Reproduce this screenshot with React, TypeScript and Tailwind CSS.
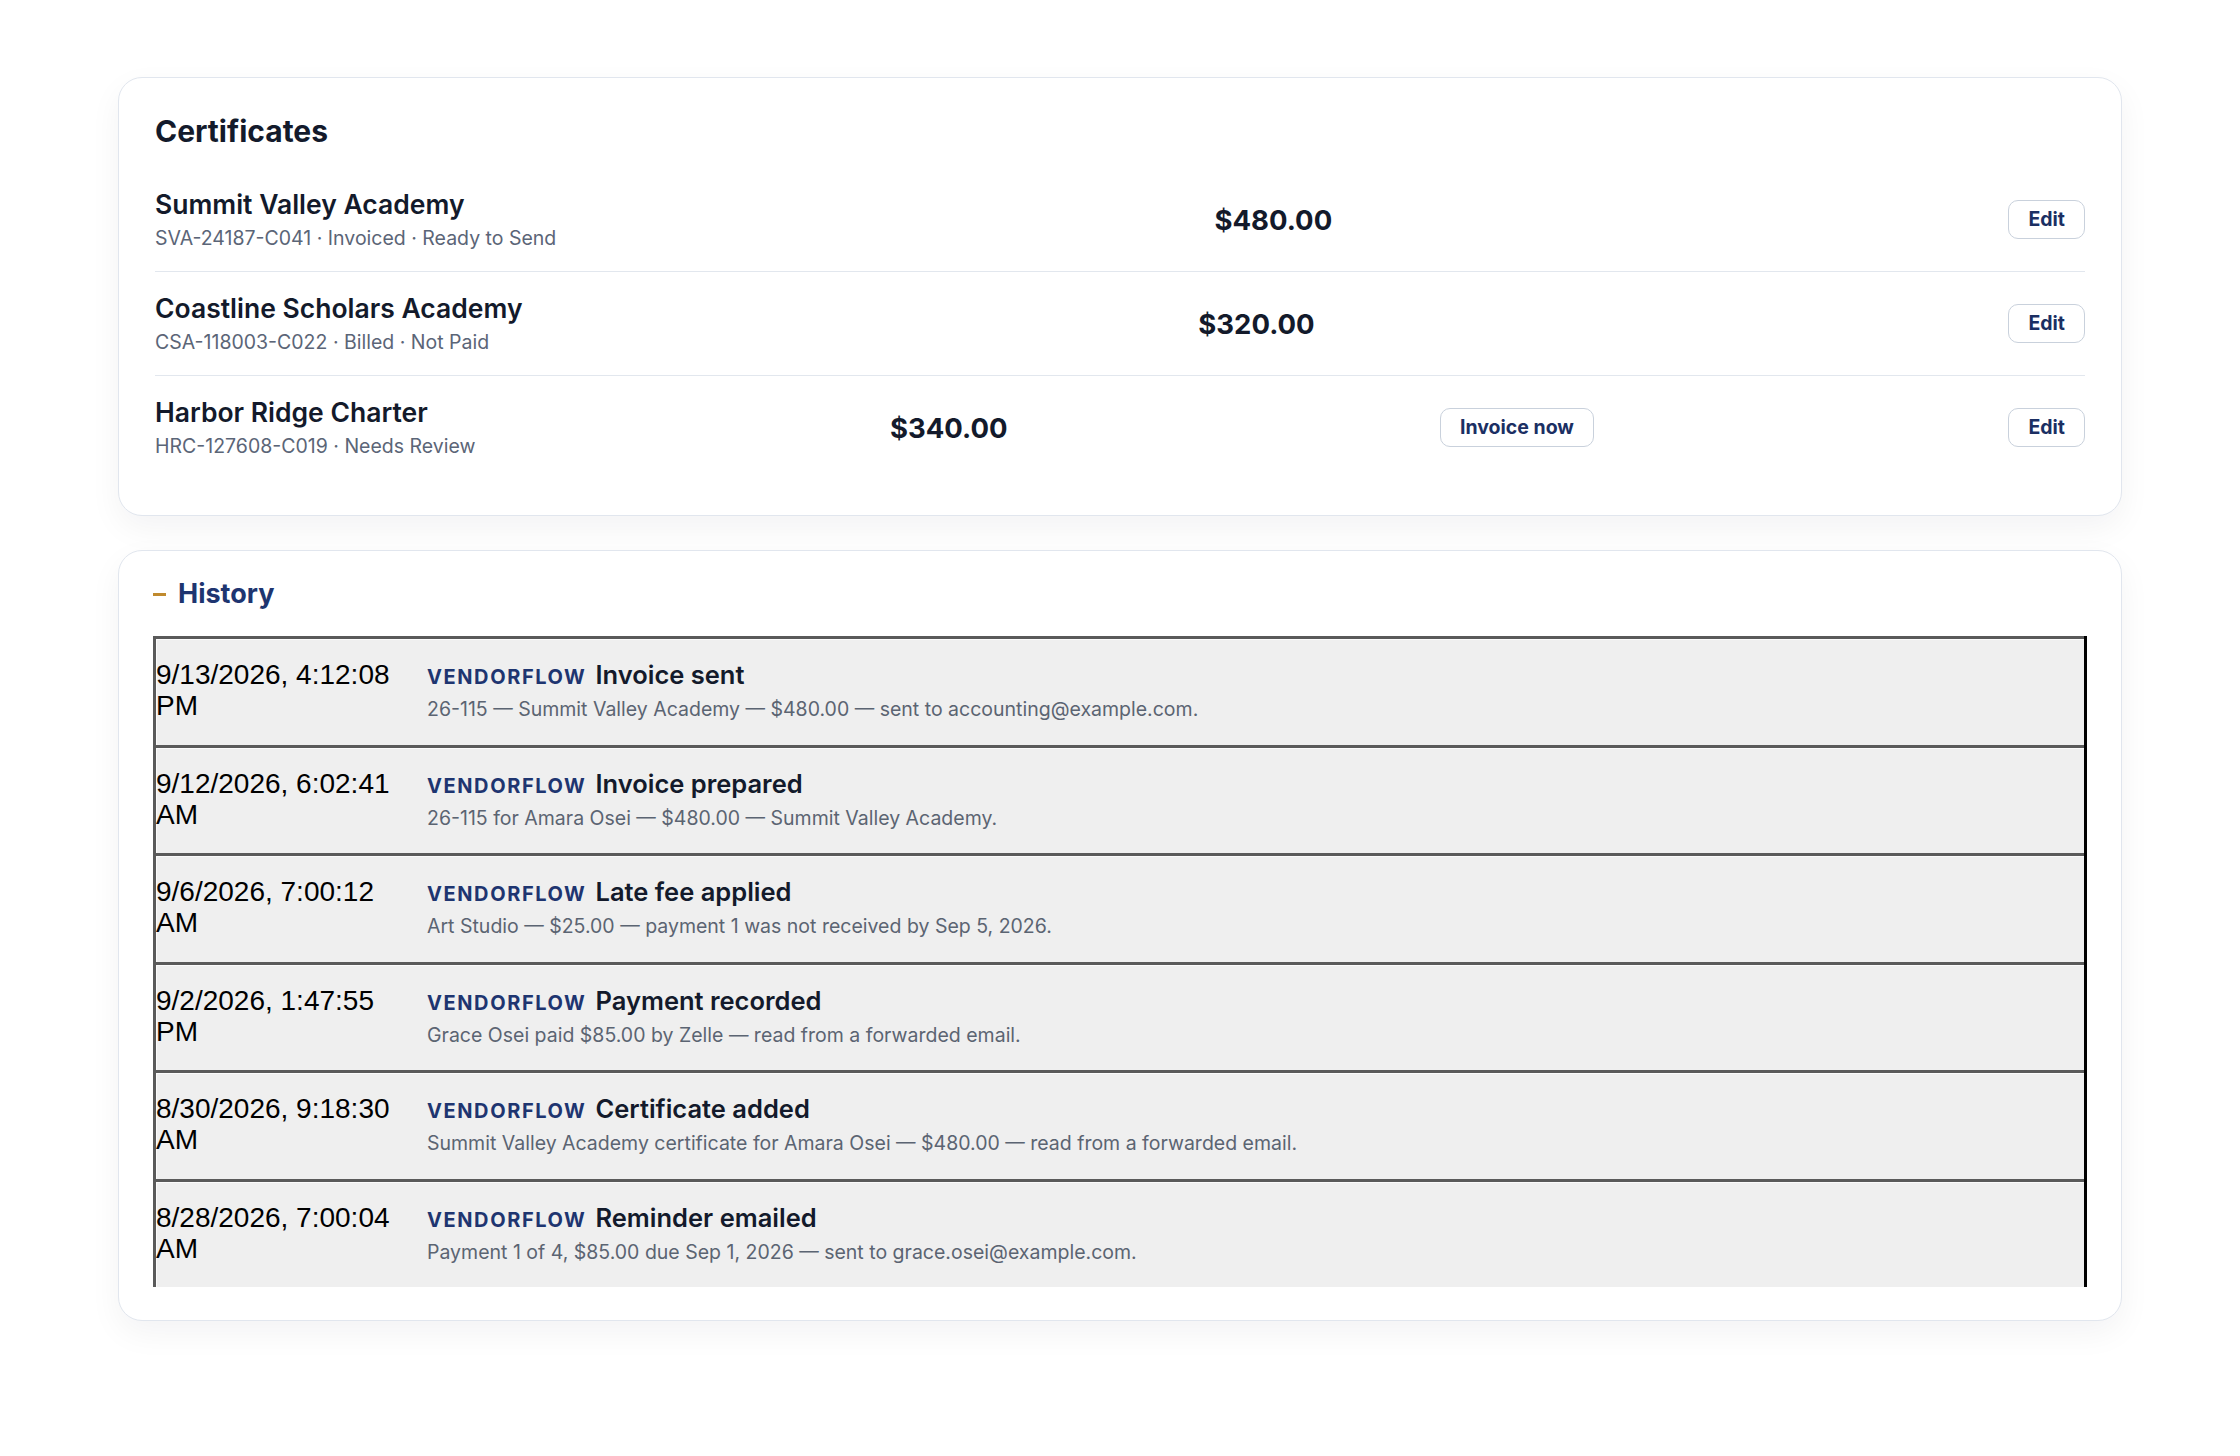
import React from "react";

type Certificate = {
  school: string;
  meta: string;
  amount: string;
  canInvoice?: boolean;
};

type HistoryEntry = {
  when: string;
  title: string;
  detail: string;
};

const CERTIFICATES: Certificate[] = [
  {
    school: "Summit Valley Academy",
    meta: "SVA-24187-C041 · Invoiced · Ready to Send",
    amount: "$480.00",
  },
  {
    school: "Coastline Scholars Academy",
    meta: "CSA-118003-C022 · Billed · Not Paid",
    amount: "$320.00",
  },
  {
    school: "Harbor Ridge Charter",
    meta: "HRC-127608-C019 · Needs Review",
    amount: "$340.00",
    canInvoice: true,
  },
];

const HISTORY: HistoryEntry[] = [
  {
    when: "9/13/2026, 4:12:08 PM",
    title: "Invoice sent",
    detail: "26-115 — Summit Valley Academy — $480.00 — sent to accounting@example.com.",
  },
  {
    when: "9/12/2026, 6:02:41 AM",
    title: "Invoice prepared",
    detail: "26-115 for Amara Osei — $480.00 — Summit Valley Academy.",
  },
  {
    when: "9/6/2026, 7:00:12 AM",
    title: "Late fee applied",
    detail: "Art Studio — $25.00 — payment 1 was not received by Sep 5, 2026.",
  },
  {
    when: "9/2/2026, 1:47:55 PM",
    title: "Payment recorded",
    detail: "Grace Osei paid $85.00 by Zelle — read from a forwarded email.",
  },
  {
    when: "8/30/2026, 9:18:30 AM",
    title: "Certificate added",
    detail: "Summit Valley Academy certificate for Amara Osei — $480.00 — read from a forwarded email.",
  },
  {
    when: "8/28/2026, 7:00:04 AM",
    title: "Reminder emailed",
    detail: "Payment 1 of 4, $85.00 due Sep 1, 2026 — sent to grace.osei@example.com.",
  },
];

function OutlineButton({ children }: { children: React.ReactNode }) {
  return (
    <button
      type="button"
      className="h-[39px] px-[19px] rounded-[10px] border border-[#c9d1dc] bg-white text-[19.5px] leading-none font-bold text-[#1b2f63]"
    >
      {children}
    </button>
  );
}

function CertificateRow({ cert }: { cert: Certificate }) {
  return (
    <li className="flex items-center justify-between py-5 border-b border-[#e2e7ee] last:border-b-0">
      <div>
        <div className="text-[26.5px] leading-[32px] font-semibold text-[#131a2b]">{cert.school}</div>
        <div className="mt-[5px] text-[19.5px] leading-[26px] text-[#5b6577]">{cert.meta}</div>
      </div>
      <div className="mr-[18px] text-[27.5px] leading-[32px] font-bold text-[#131a2b]">{cert.amount}</div>
      {cert.canInvoice && <OutlineButton>Invoice now</OutlineButton>}
      <OutlineButton>Edit</OutlineButton>
    </li>
  );
}

function HistoryRow({ entry }: { entry: HistoryEntry }) {
  return (
    <li className="flex items-start bg-[#efefef] border-t-[3px] border-[#5a5a5a] shadow-[inset_1px_1px_0_#fbfbfb] pt-5 pb-[22.5px]">
      <div className="w-[256px] shrink-0 font-['Liberation_Sans',Arial,sans-serif] text-[28px] leading-[31px] text-black">
        {entry.when}
      </div>
      <div className="ml-[15px] min-w-0">
        <div className="text-[25.5px] leading-[32px] font-semibold text-[#131a2b]">
          <span className="mr-[9px] text-[20px] leading-none font-bold tracking-[0.08em] text-[#1e3570]">VENDORFLOW</span>
          {entry.title}
        </div>
        <div className="mt-[5px] text-[19.5px] leading-[26px] text-[#5b6472]">{entry.detail}</div>
      </div>
    </li>
  );
}

export default function App() {
  return (
    <div className="min-h-screen bg-white px-[118px] pt-[77px] pb-20 font-['Inter','Noto_Sans',sans-serif]">
      {/* Certificates */}
      <section className="rounded-3xl border border-[#e1e6ee] bg-white p-9 shadow-[0_12px_32px_rgba(15,23,42,0.05)]">
        <h2 className="text-[30px] leading-[34px] font-bold text-[#131a2b]">Certificates</h2>
        <ul className="mt-5">
          {CERTIFICATES.map((c) => (
            <CertificateRow key={c.meta} cert={c} />
          ))}
        </ul>
      </section>

      {/* History */}
      <section className="mt-[34px] rounded-3xl border border-[#e1e6ee] bg-white px-[34px] pt-[27px] pb-[33px] shadow-[0_12px_32px_rgba(15,23,42,0.05)]">
        <div className="mb-[26px] flex items-center gap-3">
          <span className="block h-[3px] w-[13px] bg-[#c08a2e]" />
          <h2 className="text-[27px] leading-[32px] font-bold text-[#1e3570]">History</h2>
        </div>
        <ul className="overflow-hidden border-l-[3px] border-r-[3px] border-l-[#5a5a5a] border-r-black">
          {HISTORY.map((h) => (
            <HistoryRow key={h.when} entry={h} />
          ))}
        </ul>
      </section>
    </div>
  );
}
